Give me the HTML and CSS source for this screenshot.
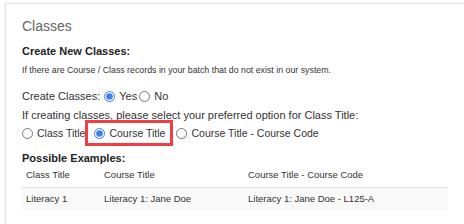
FILE: index.html
```html
<!DOCTYPE html>
<html lang="en">
<head>
    <meta charset="UTF-8">
    <title>Classes</title>
    <link rel="stylesheet" href="styles.css">
</head>
<body>
    <div class="panel">
        <h2>Classes</h2>

        <div class="section-title">Create New Classes:</div>
        <p class="note">If there are Course / Class records in your batch that do not exist in our system.</p>

        <div class="option-row">
            <span class="option-label">Create Classes:</span>
            <label class="choice"><input type="radio" name="create" checked> Yes</label>
            <label class="choice"><input type="radio" name="create"> No</label>
        </div>

        <div class="question">If creating classes, please select your preferred option for Class Title:</div>
        <div class="radio-row">
            <label class="title-opt first"><input type="radio" name="title">Class Title</label>
            <label class="title-opt highlight"><input type="radio" name="title" checked>Course Title</label>
            <label class="title-opt"><input type="radio" name="title">Course Title - Course Code</label>
        </div>

        <div class="section-title examples">Possible Examples:</div>
        <table class="examples-table">
            <thead>
                <tr>
                    <th class="col-class">Class Title</th>
                    <th class="col-course">Course Title</th>
                    <th>Course Title - Course Code</th>
                </tr>
            </thead>
            <tbody>
                <tr>
                    <td>Literacy 1</td>
                    <td>Literacy 1: Jane Doe</td>
                    <td>Literacy 1: Jane Doe - L125-A</td>
                </tr>
            </tbody>
        </table>
    </div>
</body>
</html>
```

FILE: styles.css
```css
body {
    margin: 0;
    background: #fff;
    font-family: "Liberation Sans", Arial, sans-serif;
    color: #333;
    overflow: hidden;
}

.panel {
    margin: 3px 0 0 5px;
    width: 426px;
    padding: 13px 16px 20px;
    background: #fff;
    border: 1px solid #e4e4e4;
    border-right: none;
    box-shadow: 0 0 3px rgba(0, 0, 0, 0.08);
}

h2 {
    margin: 0;
    font-size: 14px;
    line-height: 18px;
    font-weight: normal;
    color: #666;
}

.section-title {
    margin-top: 9px;
    font-size: 11px;
    line-height: 14px;
    font-weight: bold;
    color: #222;
}

.note {
    margin: 6px 0 0;
    font-size: 8.8px;
    line-height: 12px;
}

.option-row {
    display: flex;
    align-items: center;
    margin-top: 12px;
    font-size: 11px;
    line-height: 16px;
}

.option-label {
    margin-right: 4px;
}

.choice {
    display: flex;
    align-items: center;
    margin-right: 2px;
}

.choice input,
.title-opt input {
    width: 11px;
    height: 11px;
    margin: 0 4px 0 0;
    accent-color: #3b7ff0;
}

.question {
    margin-top: 3px;
    font-size: 11px;
    line-height: 16px;
}

.radio-row {
    display: flex;
    align-items: center;
    height: 20px;
    font-size: 10.5px;
}

.title-opt {
    display: flex;
    align-items: center;
    height: 20px;
}

.title-opt.first {
    margin-right: 3px;
}

.title-opt.highlight {
    padding: 0 5px 0 6px;
    margin-right: 6px;
    outline: 3px solid #f03e45;
}

.section-title.examples {
    margin-top: 8px;
}

.examples-table {
    width: 426px;
    border-collapse: collapse;
    font-size: 9.5px;
    line-height: 12px;
}

.examples-table th,
.examples-table td {
    text-align: left;
    font-weight: normal;
    padding: 4px 4px 6px;
}

.examples-table th {
    border-bottom: 1px solid #e2e2e2;
}

.examples-table td {
    padding-top: 5px;
    background: #f9f9f9;
}

.col-class {
    width: 70px;
}

.col-course {
    width: 136px;
}
```
